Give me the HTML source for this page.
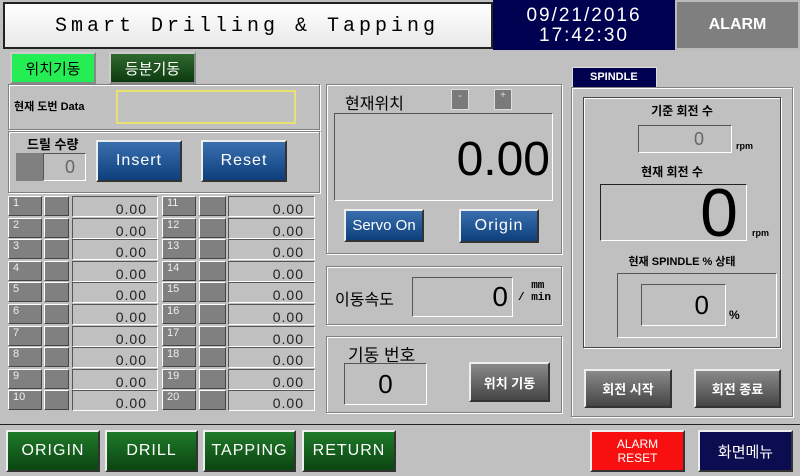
<!DOCTYPE html><html><head><meta charset="utf-8"><style>
*{box-sizing:border-box;margin:0;padding:0}
body{width:800px;height:476px;background:#c0c0c0;position:relative;overflow:hidden;font-family:"Liberation Sans","Noto Sans CJK KR",sans-serif;color:#000}
.a{position:absolute}
.sk{border:1px solid;border-color:#555 #fff #fff #555;background:#c0c0c0}
.gr{border:1px solid #808080;box-shadow:1px 1px 0 #fff inset,1px 1px 0 #fff}
.btn{display:flex;align-items:center;justify-content:center;text-align:center;border:2px solid;border-color:#eee #333 #333 #eee;white-space:nowrap}
.blue{background:linear-gradient(#3a6fae,#0d3f7c);color:#fff;font-size:16px;letter-spacing:1px}
.gray{background:linear-gradient(#8a8a8a,#454545);color:#fff;font-size:13px;font-weight:bold}
.green{background:linear-gradient(#1f7a2a,#0a4510);color:#fff;font-size:16px;letter-spacing:1px}
.r{text-align:right}
.num{background:#808080;color:#eee;font-size:11px;padding-left:4px;border:1px solid;border-color:#fff #444 #444 #fff}
.g2{background:#808080;border:1px solid;border-color:#fff #444 #444 #fff}
.val{font-size:14px;letter-spacing:1px;text-align:right;padding-right:10px;line-height:24px;color:#222}
</style></head><body>
<div class="a" style="left:3px;top:2px;width:490px;height:47px;border:2px solid #222;background:linear-gradient(#fff,#e8e8e8);font-family:'Liberation Mono',monospace;font-size:20px;letter-spacing:4px;padding:11px 0 0 50px">Smart Drilling &amp; Tapping</div>
<div class="a" style="left:493px;top:0;width:182px;height:50px;background:#000050;color:#fff;font-size:19px;letter-spacing:2px;text-align:center;line-height:20px;padding-top:6px">09/21/2016<br>17:42:30</div>
<div class="a" style="left:675px;top:0;width:125px;height:50px;background:#7f7f7f;border:2px solid #bbb;color:#fff;font-weight:bold;font-size:16px;text-align:center;line-height:46px">ALARM</div>

<div class="a btn" style="left:10px;top:52px;width:86px;height:32px;background:#25ee55;color:#000;font-size:15px;border-color:#ccc #888 #888 #ccc">위치기동</div>
<div class="a btn" style="left:109px;top:52px;width:87px;height:32px;background:linear-gradient(#2f6a2f,#0d3a10);color:#fff;font-size:15px;border-color:#ccc #888 #888 #ccc">등분기동</div>

<div class="a gr" style="left:8px;top:84px;width:312px;height:46px"></div>
<div class="a" style="left:14px;top:98px;font-size:11px;font-weight:bold">현재 도번 Data</div>
<div class="a" style="left:116px;top:90px;width:180px;height:34px;border:2px solid #e8e070"></div>
<div class="a gr" style="left:8px;top:131px;width:312px;height:62px"></div>
<div class="a" style="left:27px;top:134px;font-size:13px;font-weight:bold">드릴 수량</div>
<div class="a" style="left:16px;top:153px;width:27px;height:28px;background:#808080"></div>
<div class="a sk r" style="left:43px;top:153px;width:43px;height:28px;font-size:18px;color:#666;padding-right:10px;line-height:26px">0</div>
<div class="a btn blue" style="left:96px;top:140px;width:86px;height:42px">Insert</div>
<div class="a btn blue" style="left:201px;top:140px;width:86px;height:42px">Reset</div>

<div id="rows"></div>
<script>
let h='';for(let i=0;i<10;i++){let y=196+i*21.6;h+=`<div class="a" style="left:8px;top:${y}px"><div class="num a" style="left:0;top:0;width:34px;height:20px">${i+1}</div><div class="g2 a" style="left:36px;top:0;width:25px;height:20px"></div><div class="a sk val" style="left:64px;top:0;width:86px;height:21px">0.00</div><div class="num a" style="left:154px;top:0;width:34px;height:20px">${i+11}</div><div class="g2 a" style="left:191px;top:0;width:27px;height:20px"></div><div class="a sk val" style="left:220px;top:0;width:87px;height:21px">0.00</div></div>`}document.getElementById('rows').outerHTML=h;
</script>

<div class="a gr" style="left:326px;top:84px;width:236px;height:170px"></div>
<div class="a" style="left:345px;top:90px;font-size:16px">현재위치</div>
<div class="a" style="left:451px;top:89px;width:18px;height:21px;background:#7a7a7a;border:1px solid #ddd;color:#ddd;font-size:11px;text-align:center">-</div>
<div class="a" style="left:494px;top:89px;width:18px;height:21px;background:#7a7a7a;border:1px solid #ddd;color:#ddd;font-size:10px;text-align:center">+</div>
<div class="a sk r" style="left:334px;top:113px;width:219px;height:88px;font-size:48px;padding:18px 2px 0 0">0.00</div>
<div class="a btn blue" style="left:344px;top:209px;width:80px;height:33px;font-size:15px;letter-spacing:0">Servo On</div>
<div class="a btn blue" style="left:459px;top:209px;width:80px;height:34px">Origin</div>

<div class="a gr" style="left:326px;top:266px;width:236px;height:59px"></div>
<div class="a" style="left:335px;top:286px;font-size:16px">이동속도</div>
<div class="a sk r" style="left:412px;top:277px;width:101px;height:40px;font-size:28px;padding-right:4px;line-height:38px">0</div>
<div class="a" style="left:518px;top:280px;font-size:11px;font-weight:bold;font-family:'Liberation Mono',monospace;line-height:12px">&nbsp;&nbsp;mm<br>/ min</div>

<div class="a gr" style="left:326px;top:336px;width:236px;height:77px"></div>
<div class="a" style="left:348px;top:341px;font-size:17px">기동 번호</div>
<div class="a sk" style="left:344px;top:363px;width:83px;height:42px;font-size:26px;text-align:center;line-height:40px">0</div>
<div class="a btn gray" style="left:469px;top:362px;width:81px;height:40px">위치 기동</div>

<div class="a" style="left:572px;top:67px;width:85px;height:20px;background:#000050;color:#fff;font-size:11px;font-weight:bold;border:1px solid #ddd;border-bottom:none;padding:3px 0 0 17px">SPINDLE</div>
<div class="a gr" style="left:571px;top:87px;width:222px;height:330px"></div>
<div class="a gr" style="left:583px;top:97px;width:198px;height:251px;border-color:#444"></div>
<div class="a" style="left:584px;top:102px;width:196px;text-align:center;font-size:12px;font-weight:bold">기준 회전 수</div>
<div class="a sk r" style="left:638px;top:125px;width:94px;height:28px;font-size:18px;color:#666;padding-right:27px;line-height:26px">0</div>
<div class="a" style="left:736px;top:141px;font-size:9px;font-weight:bold">rpm</div>
<div class="a" style="left:584px;top:163px;width:176px;text-align:center;font-size:12px;font-weight:bold">현재 회전 수</div>
<div class="a r" style="left:600px;top:184px;width:147px;height:57px;border:1px solid;border-color:#222 #fff #fff #222;font-size:68px;line-height:56px;padding-right:8px">0</div>
<div class="a" style="left:752px;top:228px;font-size:9px;font-weight:bold">rpm</div>
<div class="a" style="left:584px;top:253px;width:196px;text-align:center;font-size:11px;font-weight:bold">현재 SPINDLE % 상태</div>
<div class="a" style="left:617px;top:273px;width:160px;height:65px;border:1px solid;border-color:#555 #fff #fff #555"></div>
<div class="a sk r" style="left:641px;top:284px;width:85px;height:42px;font-size:26px;padding-right:16px;line-height:40px">0</div>
<div class="a" style="left:729px;top:308px;font-size:12px;font-weight:bold">%</div>
<div class="a btn gray" style="left:584px;top:369px;width:88px;height:39px">회전 시작</div>
<div class="a btn gray" style="left:694px;top:369px;width:87px;height:39px">회전 종료</div>

<div class="a" style="left:0;top:424px;width:800px;height:1px;background:#222"></div>
<div class="a btn green" style="left:6px;top:430px;width:94px;height:42px">ORIGIN</div>
<div class="a btn green" style="left:105px;top:430px;width:93px;height:42px">DRILL</div>
<div class="a btn green" style="left:203px;top:430px;width:93px;height:42px">TAPPING</div>
<div class="a btn green" style="left:302px;top:430px;width:94px;height:42px">RETURN</div>
<div class="a btn" style="left:590px;top:430px;width:95px;height:42px;background:#f81010;color:#fff;font-size:12px;line-height:14px;white-space:normal">ALARM<br>RESET</div>
<div class="a btn" style="left:698px;top:430px;width:95px;height:42px;background:#0c0c50;color:#fff;font-size:15px">화면메뉴</div>
</body></html>
